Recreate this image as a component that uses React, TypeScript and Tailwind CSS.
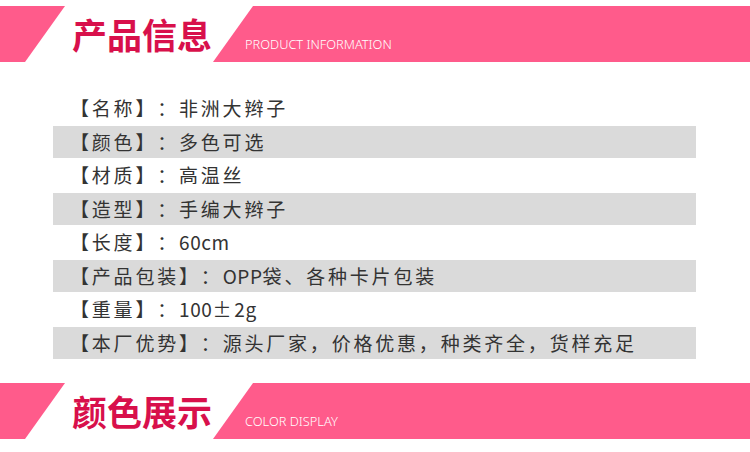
import React from 'react';

const rows = [
  { label: '【名称】', value: '非洲大辫子' },
  { label: '【颜色】', value: '多色可选' },
  { label: '【材质】', value: '高温丝' },
  { label: '【造型】', value: '手编大辫子' },
  { label: '【长度】', value: '60cm' },
  { label: '【产品包装】', value: 'OPP袋、各种卡片包装' },
  { label: '【重量】', value: '100±2g' },
  { label: '【本厂优势】', value: '源头厂家，价格优惠，种类齐全，货样充足' },
];

// latin runs keep normal spacing, CJK gets the wide tracking
function Value({ text }: { text: string }) {
  const parts = text.split(/([A-Za-z0-9]+)/).filter(Boolean);
  return (
    <span>
      {parts.map((p, i) =>
        /^[A-Za-z0-9]+$/.test(p) ? (
          <span key={i} className="tracking-[0.6px]">{p}</span>
        ) : (
          <span key={i}>{p}</span>
        )
      )}
    </span>
  );
}

function Banner({ title, sub }: { title: string; sub: string }) {
  return (
    <div className="flex h-[56px] w-full">
      {/* left slanted block */}
      <div className="h-full w-[65px] bg-[#ff5b8b] [clip-path:polygon(0_0,100%_0,38.5%_100%,0_100%)]" />
      <div className="ml-[7px] flex h-full w-[141px] items-center pb-[1px] text-[35px] font-bold leading-none text-[#d8104b] [font-family:'Noto_Sans_CJK_SC',sans-serif]">
        {title}
      </div>
      {/* right slanted block */}
      <div className="flex h-full flex-1 items-end bg-[#ff5b8b] pb-[11px] pl-[32px] [clip-path:polygon(40px_0,100%_0,100%_100%,0_100%)]">
        <span className="text-[12.8px] font-light leading-none text-white [font-family:'Noto_Sans',sans-serif]">
          {sub}
        </span>
      </div>
    </div>
  );
}

export default function App() {
  return (
    <div className="h-[452px] w-[750px] overflow-hidden bg-white pt-[6px]">
      <Banner title="产品信息" sub="PRODUCT INFORMATION" />

      <div className="mt-[29px] ml-[53px] mr-[54px]">
        {rows.map((r, i) => (
          <div
            key={r.label}
            className={
              i % 2 === 1
                ? 'flex h-[32px] items-center bg-[#dadada] pl-[17px] text-[19px] tracking-[2.8px] text-[#333] [font-family:"Noto_Sans_CJK_SC",sans-serif]'
                : 'flex h-[35px] items-center pl-[17px] text-[19px] tracking-[2.8px] text-[#333] [font-family:"Noto_Sans_CJK_SC",sans-serif]'
            }
          >
            <span>{r.label}</span>
            <span>：</span>
            <Value text={r.value} />
          </div>
        ))}
      </div>

      <div className="mt-[24px]">
        <Banner title="颜色展示" sub="COLOR DISPLAY" />
      </div>
    </div>
  );
}
